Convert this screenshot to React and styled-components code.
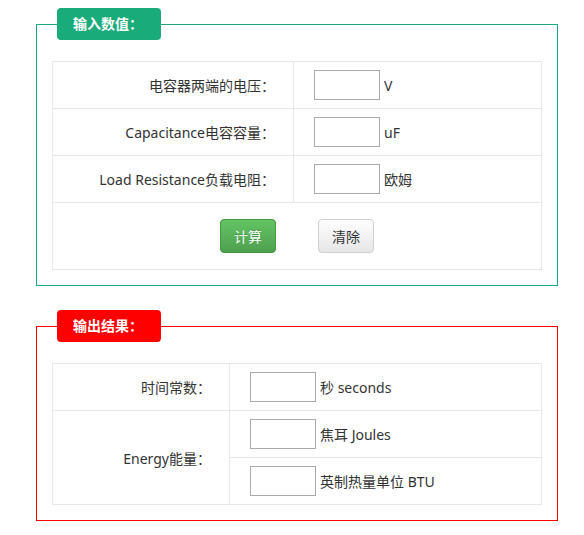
import React from 'react';
import styled, {createGlobalStyle} from 'styled-components';

const GlobalStyle = createGlobalStyle`
  body {
    margin: 0;
    background: #fff;
    font-family: "Noto Sans", "Noto Sans CJK SC", sans-serif;
    font-size: 14px;
    color: #333;
  }
`;

const Page = styled.div`
  padding: 8px 0 0 36px;
`;

const Box = styled.fieldset`
  width: 522px;
  box-sizing: border-box;
  margin: ${props => (props.$first ? '0' : '24px 0 0')};
  padding: 21px 15px 15px;
  border: 1px solid ${props => props.$color};
  min-inline-size: 0;
`;

const Legend = styled.legend`
  width: 104px;
  height: 32px;
  box-sizing: border-box;
  margin-left: 5px;
  padding: 0 16px;
  line-height: 32px;
  border-radius: 4px;
  background: ${props => props.$color};
  color: #fff;
  font-weight: bold;
  font-size: 14px;
`;

const Table = styled.table`
  width: 490px;
  border-collapse: collapse;
  table-layout: fixed;
`;

const LabelCell = styled.td`
  width: ${props => props.$width}px;
  box-sizing: border-box;
  padding: 0 18px;
  border: 1px solid #e8e8e8;
  text-align: right;
  vertical-align: middle;
`;

const ValueCell = styled.td`
  padding: 8px 20px;
  border: 1px solid #e8e8e8;
  vertical-align: middle;
`;

const Field = styled.div`
  display: flex;
  align-items: center;
  gap: 4px;
  height: 30px;
`;

const Input = styled.input`
  width: 66px;
  height: 30px;
  box-sizing: border-box;
  margin: 0;
  border: 1px solid #aaa;
  padding: 0 4px;
  font: inherit;
`;

const ButtonCell = styled.td`
  padding: 16px 0;
  border: 1px solid #e8e8e8;
  text-align: center;
`;

const Button = styled.button`
  width: 56px;
  height: 34px;
  margin: 0 21px;
  padding: 0;
  border-radius: 4px;
  font: inherit;
  font-size: 14px;
  vertical-align: middle;
  cursor: pointer;
  color: ${props => (props.$primary ? '#fff' : '#333')};
  border: 1px solid ${props => (props.$primary ? '#46963f' : '#d0d0d0')};
  background: ${props => (props.$primary
    ? 'linear-gradient(#62c462, #4fa04f)'
    : 'linear-gradient(#fff, #e6e6e6)')};
  text-shadow: ${props => (props.$primary ? '0 -1px 0 rgba(0,0,0,0.2)' : 'none')};
`;

const inputs = [
  {label: '电容器两端的电压：', unit: 'V'},
  {label: 'Capacitance电容容量：', unit: 'uF'},
  {label: 'Load Resistance负载电阻：', unit: '欧姆'},
];

const ValueField = ({unit}) => (
  <ValueCell>
    <Field>
      <Input type="text"/>
      <span>{unit}</span>
    </Field>
  </ValueCell>
);

const App = () => (
  <Page>
    <GlobalStyle/>
    <Box $first $color="#1aa97b">
      <Legend $color="#1aab7a">输入数值：</Legend>
      <Table>
        <tbody>
          {inputs.map(row => (
            <tr key={row.unit}>
              <LabelCell $width={241}>{row.label}</LabelCell>
              <ValueField unit={row.unit}/>
            </tr>
          ))}
          <tr>
            <ButtonCell colSpan={2}>
              <Button $primary type="button">计算</Button>
              <Button type="button">清除</Button>
            </ButtonCell>
          </tr>
        </tbody>
      </Table>
    </Box>

    <Box $color="#ff0000">
      <Legend $color="#ff0000">输出结果：</Legend>
      <Table>
        <tbody>
          <tr>
            <LabelCell $width={177}>时间常数：</LabelCell>
            <ValueField unit="秒 seconds"/>
          </tr>
          <tr>
            <LabelCell $width={177} rowSpan={2}>Energy能量：</LabelCell>
            <ValueField unit="焦耳 Joules"/>
          </tr>
          <tr>
            <ValueField unit="英制热量单位 BTU"/>
          </tr>
        </tbody>
      </Table>
    </Box>
  </Page>
);

export default App;
